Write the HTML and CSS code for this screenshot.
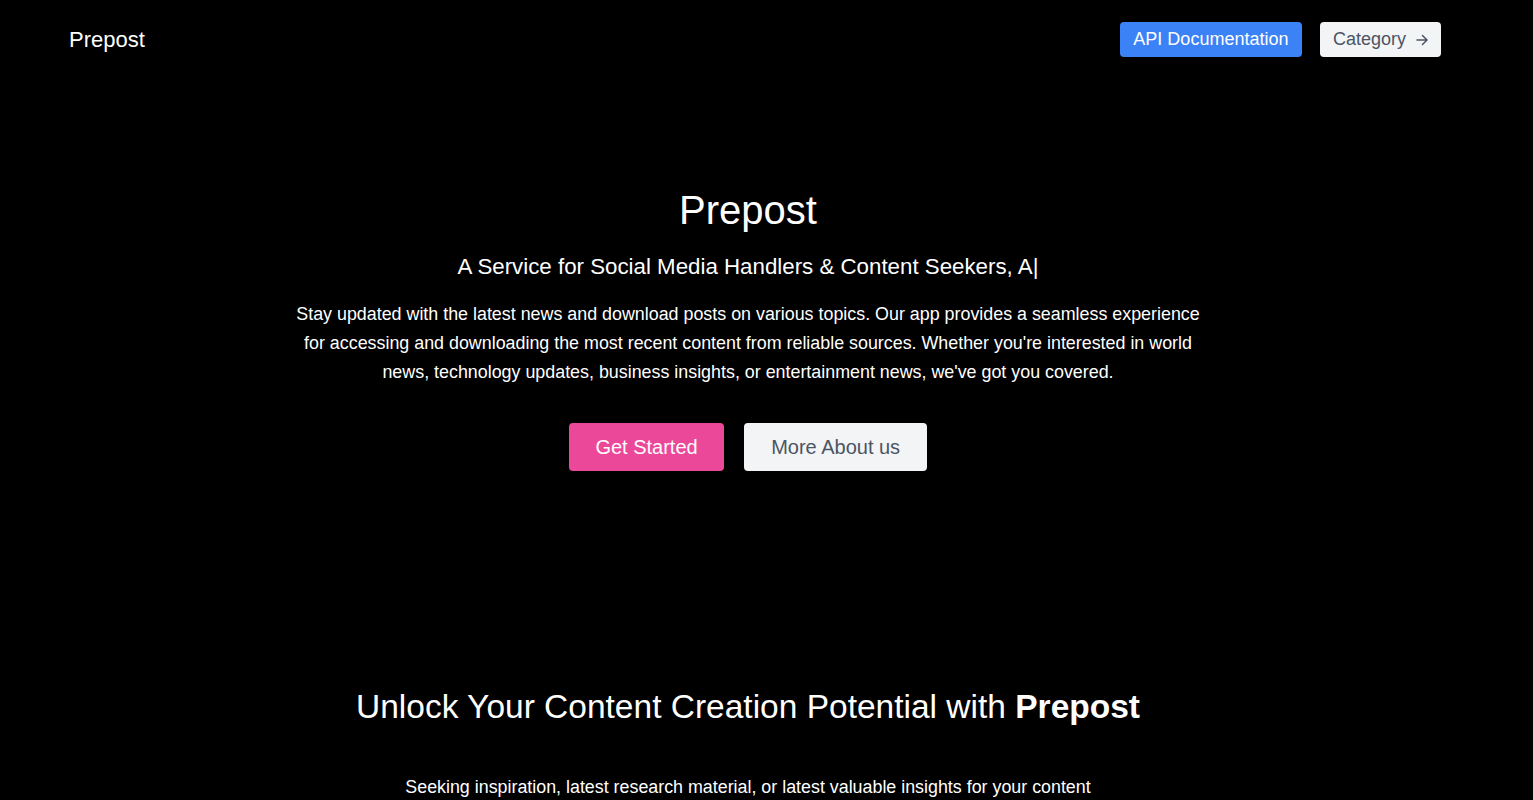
FILE: index.html
```html
<!DOCTYPE html>
<html lang="en">
<head>
<meta charset="utf-8">
<title>Prepost</title>
<link rel="stylesheet" href="styles.css">
</head>
<body>
<header class="topbar">
  <div class="brand">Prepost</div>
  <nav class="nav">
    <a class="btn-api" href="#">API Documentation</a>
    <a class="btn-cat" href="#">Category
      <svg class="arrow" width="12" height="12" viewBox="0 0 12 12" fill="none" stroke="currentColor" stroke-width="1.5" stroke-linecap="round" stroke-linejoin="round"><path d="M1 6h10M6.5 1.5 11 6l-4.5 4.5"/></svg>
    </a>
  </nav>
</header>
<main class="main">
  <section class="hero">
    <h1 class="hero-title">Prepost</h1>
    <p class="hero-sub">A Service for Social Media Handlers &amp; Content Seekers, A|</p>
    <p class="hero-text">Stay updated with the latest news and download posts on various topics. Our app provides a seamless experience for accessing and downloading the most recent content from reliable sources. Whether you're interested in world news, technology updates, business insights, or entertainment news, we've got you covered.</p>
    <div class="hero-actions">
      <a class="btn-start" href="#">Get Started</a>
      <a class="btn-more" href="#">More About us</a>
    </div>
  </section>
  <section class="unlock">
    <h2 class="unlock-title">Unlock Your Content Creation Potential with <strong>Prepost</strong></h2>
    <p class="unlock-text">Seeking inspiration, latest research material, or latest valuable insights for your content</p>
  </section>
</main>
</body>
</html>
```
FILE: styles.css
```css
* { box-sizing: border-box; }
html, body { margin: 0; padding: 0; background: #000; color: #fff; }
body { font-family: "Liberation Sans", Arial, sans-serif; overflow: hidden; }
a { text-decoration: none; }

.topbar {
  display: flex;
  align-items: center;
  justify-content: space-between;
  padding: 22px 92px 0 69px;
  height: 57px;
}
.brand { font-size: 22px; line-height: 35px; color: #fff; }
.nav { display: flex; gap: 18px; }
.btn-api, .btn-cat {
  display: inline-flex;
  align-items: center;
  height: 35px;
  padding: 0 13px;
  font-size: 18px;
  border-radius: 4px;
}
.btn-api { background: #3b82f6; color: #fff; padding: 0 13.5px; }
.btn-cat { background: #f3f4f6; color: #4b5563; }
.arrow { margin-left: 10px; margin-top: 1px; }

.main { padding-right: 37px; }
.hero {
  display: flex;
  flex-direction: column;
  align-items: center;
  text-align: center;
  padding-top: 128px;
}
.hero-title { margin: 0; font-size: 40px; font-weight: 400; line-height: 50px; }
.hero-sub { margin: 16px 0 0; font-size: 22.3px; line-height: 32px; }
.hero-text { margin: 17px 0 0; max-width: 920px; font-size: 17.88px; line-height: 29px; }
.hero-actions { display: flex; gap: 20px; margin-top: 36px; }
.btn-start, .btn-more {
  display: inline-flex;
  align-items: center;
  justify-content: center;
  height: 48px;
  padding: 0 27px;
  font-size: 20px;
  border-radius: 4px;
}
.btn-start { background: #ec4899; color: #fff; padding: 0 26.5px; }
.btn-more { background: #f3f4f6; color: #4b5563; }

.unlock {
  display: flex;
  flex-direction: column;
  align-items: center;
  text-align: center;
  padding-top: 216px;
}
.unlock-title { margin: 0; font-size: 33.5px; font-weight: 400; line-height: 40px; }
.unlock-title strong { font-weight: 700; }
.unlock-text { margin: 47px 0 0; font-size: 17.85px; line-height: 26px; }
```
